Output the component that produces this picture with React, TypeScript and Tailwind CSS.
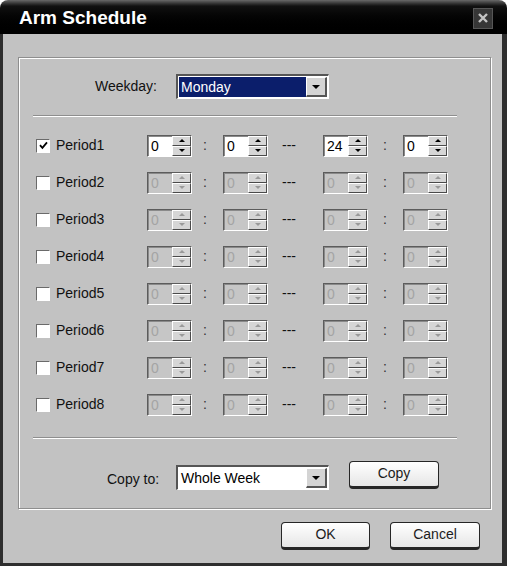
import React from 'react';

const periods = [
  { name: 'Period1', on: true, values: ['0', '0', '24', '0'] },
  { name: 'Period2', on: false, values: ['0', '0', '0', '0'] },
  { name: 'Period3', on: false, values: ['0', '0', '0', '0'] },
  { name: 'Period4', on: false, values: ['0', '0', '0', '0'] },
  { name: 'Period5', on: false, values: ['0', '0', '0', '0'] },
  { name: 'Period6', on: false, values: ['0', '0', '0', '0'] },
  { name: 'Period7', on: false, values: ['0', '0', '0', '0'] },
  { name: 'Period8', on: false, values: ['0', '0', '0', '0'] },
];

function SpinButton({ up, disabled }: { up?: boolean; disabled?: boolean }) {
  return (
    <div className="flex h-[10px] items-center justify-center border-t border-l border-t-white border-l-white border-b border-r border-b-[#4a4a4a] border-r-[#4a4a4a] bg-[#d6d6d6]">
      {up ? (
        <div
          className={`h-0 w-0 border-x-[3px] border-b-[3px] border-x-transparent ${
            disabled ? 'border-b-[#9a9a9a]' : 'border-b-black'
          }`}
        />
      ) : (
        <div
          className={`h-0 w-0 border-x-[3px] border-t-[3px] border-x-transparent ${
            disabled ? 'border-t-[#9a9a9a]' : 'border-t-black'
          }`}
        />
      )}
    </div>
  );
}

function Spinner({ value, disabled }: { value: string; disabled?: boolean }) {
  return (
    <div className="flex h-[22px] w-[45px] shrink-0 border-t border-l border-t-[#5c5c5c] border-l-[#5c5c5c] border-b border-r border-b-white border-r-white">
      <div
        className={`flex flex-1 items-center border-t border-l border-t-[#8a8a8a] border-l-[#8a8a8a] pl-[2px] text-[14px] leading-none ${
          disabled ? 'bg-[#c6c6c6] text-[#a4a4a4]' : 'bg-white text-black'
        }`}
      >
        {value}
      </div>
      <div className="flex w-[19px] flex-col justify-center bg-[#d6d6d6]">
        <SpinButton up disabled={disabled} />
        <SpinButton disabled={disabled} />
      </div>
    </div>
  );
}

function Checkbox({ checked }: { checked?: boolean }) {
  return (
    <div className="flex h-[14px] w-[14px] shrink-0 items-center justify-center border-t border-l border-t-[#6a6a6a] border-l-[#6a6a6a] border-b border-r border-b-white border-r-white bg-white">
      {checked && (
        <svg width="9" height="9" viewBox="0 0 9 9">
          <path d="M1 4.2 L3.4 6.8 L8 1.4" fill="none" stroke="#000" strokeWidth="1.8" />
        </svg>
      )}
    </div>
  );
}

function Select({ value, selected }: { value: string; selected?: boolean }) {
  return (
    <div className="flex h-[25px] w-[153px] border-t-2 border-l-2 border-t-[#555] border-l-[#555] border-b border-r border-b-white border-r-white bg-white p-[1px]">
      <div
        className={`flex flex-1 items-center pl-[2px] text-[14px] ${
          selected ? 'bg-[#0b1e6b] text-white' : 'bg-white text-black'
        }`}
      >
        {value}
      </div>
      <div className="flex w-[21px] items-center justify-center border-t border-l border-t-white border-l-white border-b-2 border-r-2 border-b-[#555] border-r-[#555] bg-[#d4d4d4]">
        <div className="h-0 w-0 border-x-[4px] border-t-[4px] border-x-transparent border-t-black" />
      </div>
    </div>
  );
}

function PushButton({ label, width }: { label: string; width: string }) {
  return (
    <button
      type="button"
      className={`${width} flex h-[28px] items-center justify-center rounded-[4px] border border-[#262626] border-b-[3px] bg-gradient-to-b from-white to-[#e6e6e6] pb-[2px] text-[14px] text-[#1c1c1c]`}
    >
      {label}
    </button>
  );
}

function Etched() {
  return <div className="ml-[14px] h-[2px] w-[424px] border-t border-t-[#8e8e8e] border-b border-b-white" />;
}

export default function App() {
  return (
    <div className="flex h-[566px] w-[507px] flex-col bg-white font-['Liberation_Sans',Arial,sans-serif]">
      <div className="flex h-[34px] shrink-0 items-center justify-between rounded-t-[8px] bg-gradient-to-b from-[#6a6a6a] via-[#111] via-[18%] to-black pl-[19px] pr-[14px]">
        <span className="pt-[3px] text-[19px] font-bold text-white">Arm Schedule</span>
        <div className="mt-[2px] flex h-[21px] w-[20px] items-center justify-center border border-[#565656] bg-[#363636]">
          <svg width="12" height="12" viewBox="0 0 12 12">
            <path d="M2 2 L10 10 M10 2 L2 10" stroke="#c4c4c4" strokeWidth="2.4" />
          </svg>
        </div>
      </div>

      <div className="flex flex-1 flex-col border-l-[3px] border-r-[5px] border-b-[3px] border-[#2e2e2e] bg-[#c2c2c2] pl-[15px] pt-[23px]">
        <div className="flex h-[452px] w-[473px] flex-col border border-[#8e8e8e] shadow-[inset_1px_1px_0_#fff,1px_1px_0_#fff]">
          <div className="mt-[16px] flex items-center">
            <span className="ml-[76px] w-[81px] text-[14px] text-[#111]">Weekday:</span>
            <Select value="Monday" selected />
          </div>

          <div className="mt-[16px]">
            <Etched />
          </div>

          <div className="mt-[10px] flex flex-col">
            {periods.map((p) => (
              <div key={p.name} className="flex h-[37px] items-center pl-[17px]">
                <Checkbox checked={p.on} />
                <span className="ml-[6px] w-[91px] text-[14px] text-[#111]">{p.name}</span>
                <Spinner value={p.values[0]} disabled={!p.on} />
                <span className="w-[31px] pl-[11px] text-[14px] text-[#333]">:</span>
                <Spinner value={p.values[1]} disabled={!p.on} />
                <span className="w-[55px] pl-[14px] text-[14px] text-[#111]">---</span>
                <Spinner value={p.values[2]} disabled={!p.on} />
                <span className="w-[35px] pl-[15px] text-[14px] text-[#333]">:</span>
                <Spinner value={p.values[3]} disabled={!p.on} />
              </div>
            ))}
          </div>

          <div className="mt-[14px]">
            <Etched />
          </div>

          <div className="mt-[22px] flex items-start">
            <span className="ml-[88px] mt-[8px] w-[69px] text-[14px] text-[#111]">Copy to:</span>
            <div className="mt-[4px]">
              <Select value="Whole Week" />
            </div>
            <div className="ml-[20px]">
              <PushButton label="Copy" width="w-[90px]" />
            </div>
          </div>
        </div>

        <div className="mt-[13px] flex justify-end gap-[20px] pr-[22px]">
          <PushButton label="OK" width="w-[89px]" />
          <PushButton label="Cancel" width="w-[90px]" />
        </div>
      </div>
    </div>
  );
}
